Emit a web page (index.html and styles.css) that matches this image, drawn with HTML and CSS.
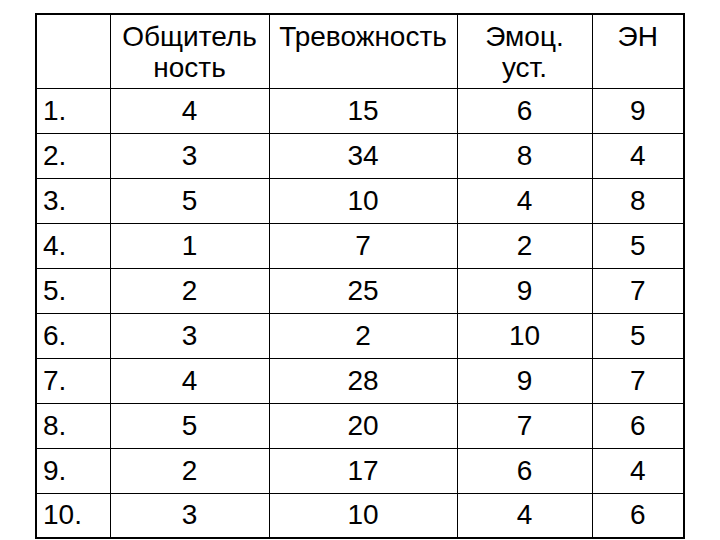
FILE: index.html
```html
<!DOCTYPE html>
<html lang="ru">
<head>
<meta charset="utf-8">
<title>Таблица</title>
<link rel="stylesheet" href="styles.css">
</head>
<body>
<table class="data">
  <colgroup>
    <col class="c-num">
    <col class="c-a">
    <col class="c-b">
    <col class="c-c">
    <col class="c-d">
  </colgroup>
  <thead>
    <tr class="head">
      <th></th>
      <th>Общитель<br>ность</th>
      <th>Тревожность</th>
      <th>Эмоц.<br>уст.</th>
      <th>ЭН</th>
    </tr>
  </thead>
  <tbody>
    <tr><td class="num">1.</td><td>4</td><td>15</td><td>6</td><td>9</td></tr>
    <tr><td class="num">2.</td><td>3</td><td>34</td><td>8</td><td>4</td></tr>
    <tr><td class="num">3.</td><td>5</td><td>10</td><td>4</td><td>8</td></tr>
    <tr><td class="num">4.</td><td>1</td><td>7</td><td>2</td><td>5</td></tr>
    <tr><td class="num">5.</td><td>2</td><td>25</td><td>9</td><td>7</td></tr>
    <tr><td class="num">6.</td><td>3</td><td>2</td><td>10</td><td>5</td></tr>
    <tr><td class="num">7.</td><td>4</td><td>28</td><td>9</td><td>7</td></tr>
    <tr><td class="num">8.</td><td>5</td><td>20</td><td>7</td><td>6</td></tr>
    <tr><td class="num">9.</td><td>2</td><td>17</td><td>6</td><td>4</td></tr>
    <tr><td class="num">10.</td><td>3</td><td>10</td><td>4</td><td>6</td></tr>
  </tbody>
</table>
</body>
</html>
```
FILE: styles.css
```css
html, body {
  margin: 0;
  padding: 0;
  background: #fff;
}
body {
  padding: 13px 0 0 35px;
  font-family: "Liberation Sans", Arial, sans-serif;
  color: #000;
}
.data {
  border-collapse: collapse;
  table-layout: fixed;
  width: 650px;
  border: 2px solid #000;
  font-size: 28px;
  line-height: 31px;
}
.c-num { width: 74px; }
.c-a { width: 159px; }
.c-b { width: 188px; }
.c-c { width: 135px; }
.c-d { width: 92px; }
.data th, .data td {
  border: 1px solid #000;
  padding: 0;
  text-align: center;
  font-weight: normal;
}
.head th {
  height: 74px;
  vertical-align: top;
  padding-top: 6px;
  box-sizing: border-box;
}
.data td {
  height: 45px;
  vertical-align: middle;
  padding-bottom: 1px;
  box-sizing: border-box;
}
.data td.num {
  text-align: left;
  padding-left: 6px;
}
```
